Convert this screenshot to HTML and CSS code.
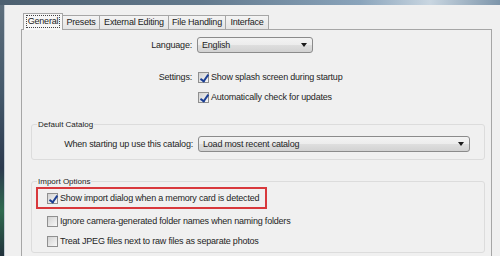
FILE: index.html
```html
<!DOCTYPE html>
<html lang="en">
<head>
    <meta charset="UTF-8">
    <link rel="stylesheet" href="styles.css">
    <title>Preferences</title>
</head>
<body>
<div class="screen">
    <div class="titlebar"></div>
    <div class="main">
        <div class="desk"></div>
        <div class="window">
            <div class="tabs">
                <div class="tab tab-general active"><span class="focus">General</span></div>
                <div class="tab tab-presets">Presets</div>
                <div class="tab tab-external">External Editing</div>
                <div class="tab tab-files">File Handling</div>
                <div class="tab tab-interface">Interface</div>
            </div>
            <div class="panel">
                <div class="row row-lang">
                    <div class="label">Language:</div>
                    <div class="select select-lang"><span>English</span><span class="arrow"></span></div>
                </div>
                <div class="row row-settings">
                    <div class="label">Settings:</div>
                    <label class="check"><span class="box checked"></span>Show splash screen during startup</label>
                </div>
                <div class="row row-update">
                    <div class="label"></div>
                    <label class="check"><span class="box checked"></span>Automatically check for updates</label>
                </div>

                <div class="group group-catalog">
                    <div class="legend">Default Catalog</div>
                    <div class="row">
                        <div class="label">When starting up use this catalog:</div>
                        <div class="select select-catalog"><span>Load most recent catalog</span><span class="arrow"></span></div>
                    </div>
                </div>

                <div class="group group-import">
                    <div class="legend">Import Options</div>
                    <div class="highlight">
                        <label class="check"><span class="box checked"></span>Show import dialog when a memory card is detected</label>
                    </div>
                    <label class="check plain"><span class="box"></span>Ignore camera-generated folder names when naming folders</label>
                    <label class="check plain"><span class="box"></span>Treat JPEG files next to raw files as separate photos</label>
                </div>
            </div>
        </div>
    </div>
</div>
</body>
</html>
```

FILE: styles.css
```css
* {
    box-sizing: border-box;
}

body {
    margin: 0;
    width: 500px;
    height: 256px;
    overflow: hidden;
    font-family: "Liberation Sans", Arial, sans-serif;
    font-size: 9px;
    letter-spacing: -0.2px;
    color: #1e1e1e;
    background: #f0f0f0;
}

.screen {
    display: flex;
    flex-direction: column;
    height: 256px;
}

.titlebar {
    height: 5px;
    flex-shrink: 0;
    background: linear-gradient(90deg, #4d6070 0%, #62798d 40%, #8aa4bb 72%, #c9d6e1 86%, #7d95aa 100%);
}

.main {
    display: flex;
    flex: 1;
    min-height: 0;
}

.desk {
    width: 4px;
    background: linear-gradient(180deg, #5d6e7c 0%, #44586a 35%, #2c3a4e 65%, #2f6a4e 82%, #22323c 100%);
}

.window {
    flex: 1;
    display: flex;
    flex-direction: column;
    background: #f0f0f0;
    border-left: 1px solid #c4ccd4;
    padding: 8px 8px 0 16px;
}

/* tabs */
.tabs {
    display: flex;
    align-items: flex-end;
    height: 16px;
    flex-shrink: 0;
    padding-left: 2px;
}

.tab {
    height: 14px;
    line-height: 13px;
    text-align: center;
    border: 1px solid #a6a6a6;
    border-bottom: none;
    background: linear-gradient(180deg, #f4f4f4, #e4e4e4);
    margin-right: -1px;
    color: #222;
}

.tab-general { width: 40px; }
.tab-presets { width: 38px; }
.tab-external { width: 70px; }
.tab-files { width: 58px; }
.tab-interface { width: 44px; }

.tab.active {
    height: 17px;
    line-height: 15px;
    margin-bottom: -1px;
    background: #f7f7f7;
    position: relative;
    z-index: 1;
}

.tab .focus {
    display: inline-block;
    line-height: 11px;
    padding: 0 1px;
    border: 1px dotted #444;
}

.panel {
    flex: 1;
    border: 1px solid #a6a6a6;
    border-bottom: none;
    padding: 7px 6px 0 0;
}

/* rows */
.row {
    display: flex;
    align-items: center;
    height: 16px;
}

.row > .label {
    width: 175px;
    flex-shrink: 0;
    text-align: right;
    padding-right: 5px;
}

.row-settings {
    margin-top: 16px;
}

.row-update {
    margin-top: 4px;
}

.select {
    display: flex;
    align-items: center;
    justify-content: space-between;
    height: 16px;
    padding: 0 5px 0 4px;
    border: 1px solid #8b8b8b;
    border-radius: 3px;
    background: linear-gradient(180deg, #f3f3f3 0%, #ececec 50%, #dedede 52%, #d2d2d2 100%);
}

.select-lang {
    width: 116px;
}

.select-catalog {
    width: 272px;
}

.arrow {
    width: 0;
    height: 0;
    border-left: 3px solid transparent;
    border-right: 3px solid transparent;
    border-top: 4px solid #1a1a1a;
}

.check {
    display: flex;
    align-items: center;
    white-space: nowrap;
}

.box {
    width: 11px;
    height: 11px;
    flex-shrink: 0;
    border: 1px solid #8f8f8f;
    background: linear-gradient(135deg, #d2d2d2, #f7f7f7);
    margin: 0 2px 0 1px;
    position: relative;
}

.box.checked::after {
    content: "";
    position: absolute;
    left: 3px;
    top: 0;
    width: 3px;
    height: 7px;
    border: solid #1c3f94;
    border-width: 0 2px 2px 0;
    transform: rotate(35deg);
}

/* groups */
.group {
    position: relative;
    border: 1px solid #dcdcdc;
    border-radius: 3px;
    margin-left: 9px;
}

.legend {
    position: absolute;
    top: -5px;
    left: 5px;
    padding: 0 1px;
    line-height: 9px;
    background: #f0f0f0;
    font-size: 8px;
    letter-spacing: 0;
    color: #222;
}

.group-catalog {
    margin-top: 19px;
    height: 36px;
    padding-top: 11px;
}

.group-catalog .row > .label {
    width: 166px;
}

.group-import {
    margin-top: 21px;
    height: 72px;
    padding: 5px 0 0 4px;
}

.highlight {
    width: 231px;
    height: 22px;
    border: 2px solid #d8383c;
    display: flex;
    align-items: center;
    padding-left: 8px;
}

.check.plain {
    height: 16px;
    padding-left: 10px;
    margin-top: 4px;
}
```
